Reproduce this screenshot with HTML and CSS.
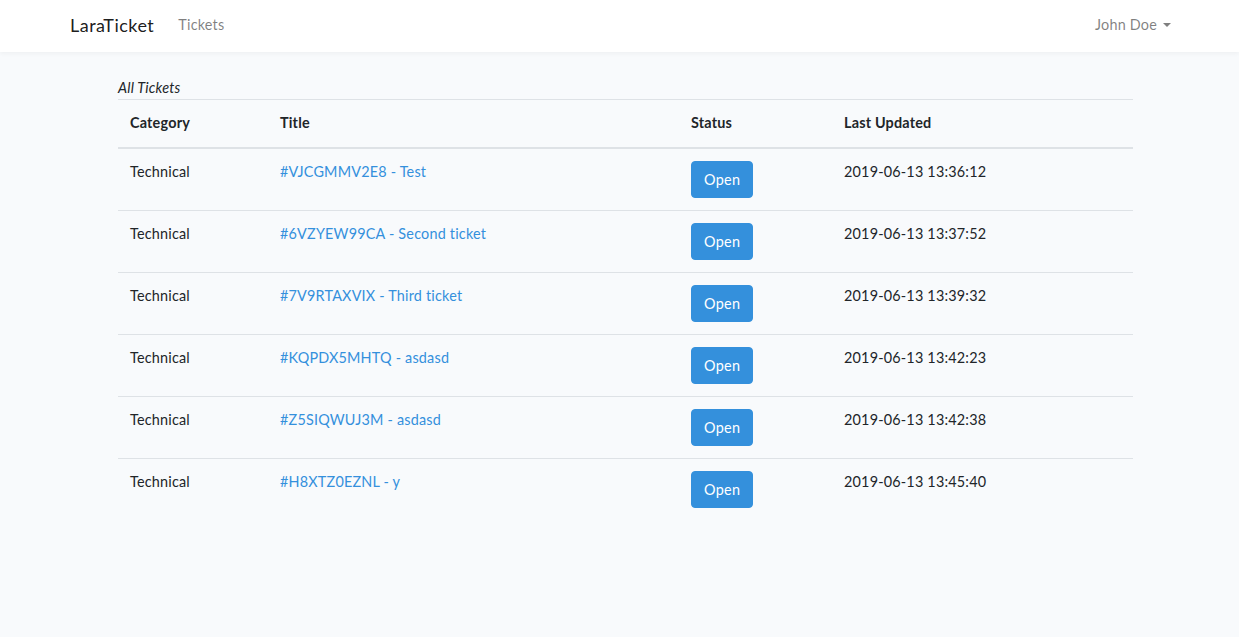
FILE: index.html
```html
<!DOCTYPE html>
<html lang="en">
<head>
<meta charset="utf-8">
<title>LaraTicket</title>
<link rel="stylesheet" href="styles.css">
</head>
<body>
<nav class="navbar">
  <div class="nav-container">
    <a class="brand" href="#">LaraTicket</a>
    <a class="nav-link" href="#">Tickets</a>
    <div class="spacer"></div>
    <a class="nav-link dropdown" href="#">John Doe<span class="caret"></span></a>
  </div>
</nav>
<main class="main">
  <div class="content">
    <div class="caption">All Tickets</div>
    <table class="table">
      <colgroup>
        <col class="c1"><col class="c2"><col class="c3"><col class="c4">
      </colgroup>
      <thead>
        <tr><th>Category</th><th>Title</th><th>Status</th><th>Last Updated</th></tr>
      </thead>
      <tbody>
        <tr><td>Technical</td><td><a href="#">#VJCGMMV2E8 - Test</a></td><td><span class="btn">Open</span></td><td>2019-06-13 13:36:12</td></tr>
        <tr><td>Technical</td><td><a href="#">#6VZYEW99CA - Second ticket</a></td><td><span class="btn">Open</span></td><td>2019-06-13 13:37:52</td></tr>
        <tr><td>Technical</td><td><a href="#">#7V9RTAXVIX - Third ticket</a></td><td><span class="btn">Open</span></td><td>2019-06-13 13:39:32</td></tr>
        <tr><td>Technical</td><td><a href="#">#KQPDX5MHTQ - asdasd</a></td><td><span class="btn">Open</span></td><td>2019-06-13 13:42:23</td></tr>
        <tr><td>Technical</td><td><a href="#">#Z5SIQWUJ3M - asdasd</a></td><td><span class="btn">Open</span></td><td>2019-06-13 13:42:38</td></tr>
        <tr><td>Technical</td><td><a href="#">#H8XTZ0EZNL - y</a></td><td><span class="btn">Open</span></td><td>2019-06-13 13:45:40</td></tr>
      </tbody>
    </table>
  </div>
</main>
</body>
</html>
```
FILE: styles.css
```css
* { box-sizing: border-box; }
html, body { margin: 0; padding: 0; }
body {
  background: #f8fafc;
  color: #212529;
  font-family: "Lato", "Noto Sans", sans-serif;
  font-size: 14.4px;
  line-height: 1.6;
  letter-spacing: 0.2px;
}
a { text-decoration: none; color: #3490dc; }

.navbar {
  background: #fff;
  box-shadow: 0 2px 4px rgba(0,0,0,.04);
  height: 52px;
}
.nav-container {
  display: flex;
  align-items: center;
  height: 100%;
  padding: 0 60px 2px 70px;
}
.brand {
  color: rgba(0,0,0,.9);
  font-size: 18px;
  letter-spacing: 0.5px;
  margin-right: 16px;
}
.nav-link {
  color: rgba(0,0,0,.5);
  padding: 0 8px;
}
.spacer { flex: 1; }
.caret {
  display: inline-block;
  margin-left: 6px;
  vertical-align: 3px;
  border-top: 4.3px solid;
  border-left: 4.3px solid transparent;
  border-right: 4.3px solid transparent;
}

.main { padding: 24px 0; }
.content {
  width: 1015px;
  margin-left: 118px;
}
.caption { font-style: italic; line-height: 22px; margin-top: 1px; }
.table {
  width: 100%;
  border-collapse: collapse;
}
.c1 { width: 150px; }
.c2 { width: 411px; }
.c3 { width: 153px; }
.c4 { width: 301px; }
.table th, .table td {
  padding: 11px 12px 13px;
  border-top: 1px solid #dee2e6;
  text-align: left;
  vertical-align: top;
}
.table th {
  font-weight: 700;
  border-bottom: 2px solid #dee2e6;
}
.table tbody tr:first-child td { border-top: 0; }
.table td:nth-child(3) { padding-top: 12px; padding-bottom: 12px; }
.btn {
  display: inline-block;
  background: #3490dc;
  border: 1px solid #3490dc;
  color: #fff;
  padding: 6px 12px 6px;
  border-radius: 4px;
  line-height: 23px;
  letter-spacing: 0.3px;
}
```
